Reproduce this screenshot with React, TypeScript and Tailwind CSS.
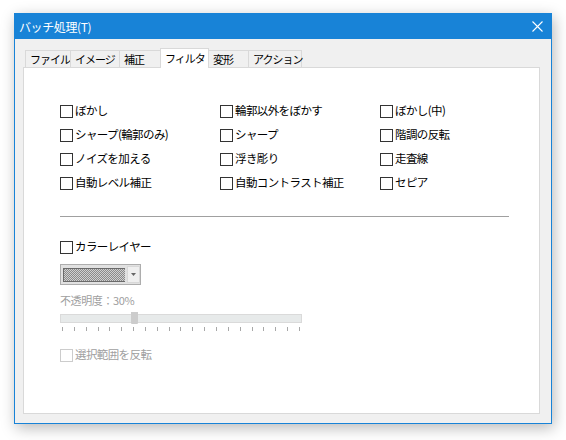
import React from "react";

const font = { fontFamily: '"Noto Sans CJK JP", "Noto Sans", sans-serif' };

const tabs = [
  { t: "ファイル", w: "w-[46px]" },
  { t: "イメージ", w: "w-[50px]" },
  { t: "補正", w: "w-[42px]" },
  { t: "フィルタ", w: "w-[49px]" },
  { t: "変形", w: "w-[41px]" },
  { t: "アクション", w: "w-[54px]" },
];
const activeTab = 3;

const filters = [
  "ぼかし",
  "輪郭以外をぼかす",
  "ぼかし(中)",
  "シャープ(輪郭のみ)",
  "シャープ",
  "階調の反転",
  "ノイズを加える",
  "浮き彫り",
  "走査線",
  "自動レベル補正",
  "自動コントラスト補正",
  "セピア",
];

function Check({ label, disabled = false }: { label: string; disabled?: boolean }) {
  return (
    <label className="flex h-6 items-center gap-[2px]">
      <span
        className={
          disabled
            ? "h-[13px] w-[13px] shrink-0 border border-[#cccccc] bg-white"
            : "h-[13px] w-[13px] shrink-0 border border-[#333333] bg-white"
        }
      />
      <span
        className={
          disabled
            ? "whitespace-nowrap text-[11.5px] tracking-[-0.6px] text-[#a0a0a0]"
            : "whitespace-nowrap text-[11.5px] tracking-[-0.6px] text-black"
        }
      >
        {label}
      </span>
    </label>
  );
}

function Checker() {
  return (
    <svg width="69" height="14" className="block">
      <defs>
        <pattern id="chk" width="2" height="2" patternUnits="userSpaceOnUse">
          <rect width="2" height="2" fill="#d0d0d0" />
          <rect width="1" height="1" fill="#8a8a8a" />
          <rect x="1" y="1" width="1" height="1" fill="#8a8a8a" />
        </pattern>
      </defs>
      <rect x="0.5" y="0.5" width="68" height="13" fill="url(#chk)" stroke="#6a6a6a" />
    </svg>
  );
}

export default function App() {
  const ticks = Array.from({ length: 21 }, (_, i) => i);
  return (
    <div className="min-h-[440px] w-[566px] bg-white pl-[14px] pt-[13px]" style={font}>
      <div className="flex h-[411px] w-[538px] flex-col border border-[#1883d7] bg-[#f0f0f0] shadow-[2px_4px_14px_rgba(0,0,0,0.28)]">
        {/* title bar */}
        <div className="flex h-[25px] shrink-0 items-center justify-between bg-[#1883d7] pl-[4px] pr-[8px]">
          <span className="text-[12px] tracking-[-0.4px] text-white">バッチ処理(T)</span>
          <svg width="11" height="11" viewBox="0 0 11 11">
            <path d="M0.5 0.5 L10.5 10.5 M10.5 0.5 L0.5 10.5" stroke="#ffffff" strokeWidth="1.1" />
          </svg>
        </div>

        {/* tabs */}
        <div className="flex items-end pl-[10px] pt-[9px]">
          {tabs.map((tab, i) =>
            i === activeTab ? (
              <div
                key={tab.t}
                className={`relative z-10 -mb-px -ml-px flex h-[20px] shrink-0 items-center whitespace-nowrap border border-b-0 border-[#d9d9d9] bg-white pl-[4px] text-[11px] tracking-[-1px] text-black ${tab.w}`}
              >
                {tab.t}
              </div>
            ) : (
              <div
                key={tab.t}
                className={`-ml-px flex h-[17px] shrink-0 items-center whitespace-nowrap border border-b-0 border-[#d9d9d9] bg-[#f0f0f0] pl-[4px] text-[11px] tracking-[-1px] text-black first:ml-0 ${tab.w}`}
              >
                {tab.t}
              </div>
            )
          )}
        </div>

        {/* panel */}
        <div className="mb-[9px] ml-[8px] mr-[11px] flex-1 border border-[#d9d9d9] bg-white pl-[36px] pt-[31px]">
          <div className="grid w-[480px] grid-cols-[160px_160px_160px]">
            {filters.map((f) => (
              <Check key={f} label={f} />
            ))}
          </div>

          <div className="mr-[30px] mt-[21px] h-px bg-[#a0a0a0]" />

          <div className="mt-[18px]">
            <Check label="カラーレイヤー" />
          </div>

          <div className="mt-[5px] flex h-[21px] w-[81px] items-center gap-[2px] border border-[#adadad] bg-[#e1e1e1] pl-[2px]">
            <Checker />
            <div className="flex h-[17px] w-[14px] items-center justify-center border border-[#d8d8d8] bg-[#efefef]">
              <svg width="5" height="3" viewBox="0 0 5 3">
                <path d="M0 0 H5 L2.5 3 Z" fill="#666666" />
              </svg>
            </div>
          </div>

          <div className="mt-[6px] text-[11px] leading-[18px] tracking-[-0.4px] text-[#a0a0a0]">不透明度：30%</div>

          <div className="relative mt-[5px] w-[242px]">
            <div className="h-[9px] border border-[#dadada] bg-[#e7eaea]" />
            <div className="absolute left-[71px] top-[-2px] h-[12px] w-[7px] rounded-b-[1px] bg-[#cccccc]" />
            <div className="mt-[4px] flex justify-between px-[2px]">
              {ticks.map((i) => (
                <span key={i} className="h-[4px] w-px bg-[#a8a8a8]" />
              ))}
            </div>
          </div>

          <div className="mt-[12px]">
            <Check label="選択範囲を反転" disabled />
          </div>
        </div>
      </div>
    </div>
  );
}
